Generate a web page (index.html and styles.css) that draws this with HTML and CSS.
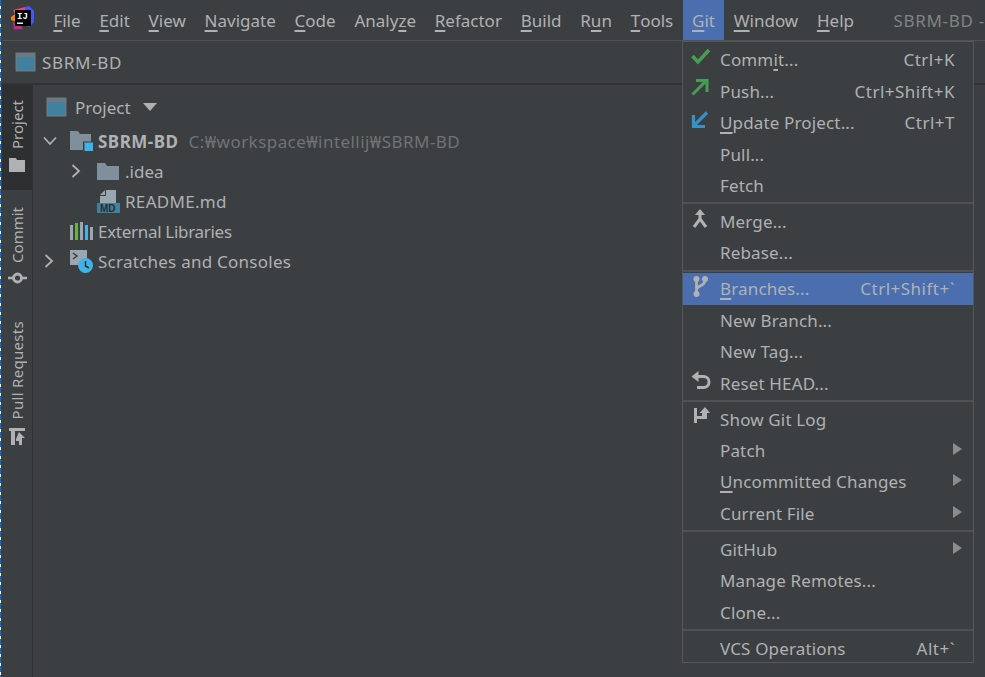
FILE: index.html
```html
<!DOCTYPE html>
<html lang="en">
<head>
<meta charset="utf-8">
<title>SBRM-BD</title>
<link rel="stylesheet" href="styles.css">
</head>
<body>
<div class="app">
  <header class="titlebar">
    <svg class="logo" width="24" height="24" viewBox="0 0 24 24">
      <path d="M2 4 L14 1 L15 6 L4 8 Z" fill="#fc3f6e"/>
      <path d="M14 1 L18 0 L23 5 L23 16 L18 21 L14 19 Z" fill="#3f5cf0"/>
      <path d="M0 11 L4 8 L5 16 L0 14 Z" fill="#f97a12"/>
      <path d="M2 16 L10 20 L12 23 L3 23.500 Z" fill="#c02b8c"/>
      <rect x="4" y="4" width="16" height="16" fill="#000"/>
      <text x="6" y="12.500" class="logo-text">IJ</text>
      <rect x="6" y="16.500" width="6" height="1.400" fill="#fff"/>
    </svg>
    <nav class="menubar">
      <span class="mi"><u>F</u>ile</span>
      <span class="mi"><u>E</u>dit</span>
      <span class="mi"><u>V</u>iew</span>
      <span class="mi"><u>N</u>avigate</span>
      <span class="mi"><u>C</u>ode</span>
      <span class="mi">Analy<u>z</u>e</span>
      <span class="mi"><u>R</u>efactor</span>
      <span class="mi"><u>B</u>uild</span>
      <span class="mi">R<u>u</u>n</span>
      <span class="mi"><u>T</u>ools</span>
      <span class="mi active"><u>G</u>it</span>
      <span class="mi"><u>W</u>indow</span>
      <span class="mi"><u>H</u>elp</span>
    </nav>
    <span class="wintitle">SBRM-BD -</span>
  </header>
  <div class="navbar">
    <svg width="22" height="20" viewBox="0 0 22 20"><rect x="0.500" y="0.500" width="20" height="19" fill="#6e7881"/><rect x="2" y="5" width="17" height="13" fill="#40819f"/></svg>
    <span class="caps">SBRM-BD</span>
  </div>
  <div class="workspace">
    <aside class="stripe">
      <div class="tab on">
        <span class="vt">Project</span>
        <svg width="16" height="14" viewBox="0 0 16 14"><path d="M0 0H7L8 2H16V14H0Z" fill="#afb1b3"/></svg>
      </div>
      <div class="tab commit">
        <span class="vt">Commit</span>
        <svg width="19" height="12" viewBox="0 0 19 12"><path d="M0 4.700H5V7.300H0ZM14 4.700H19V7.300H14Z" fill="#afb1b3"/><circle cx="9.500" cy="6" r="4" fill="none" stroke="#afb1b3" stroke-width="2.800"/></svg>
      </div>
      <div class="tab pull">
        <span class="vt spaced">Pull Requests</span>
        <svg width="16" height="17" viewBox="0 0 16 17"><path d="M0 0H16V3H0Z M2 3H6V17H2Z M10 4L16 10H13V17H10V13H7V11Z" fill="#afb1b3"/></svg>
      </div>
    </aside>
    <main class="panel">
      <div class="panel-head">
        <svg width="22" height="20" viewBox="0 0 22 20"><rect x="0.500" y="0.500" width="20" height="19" fill="#6e7881"/><rect x="2" y="5" width="17" height="13" fill="#40819f"/></svg>
        <span>Project</span>
        <svg class="dd" width="14" height="8" viewBox="0 0 14 8"><path d="M0 0H14L7 8Z" fill="#afb1b3"/></svg>
      </div>
      <ul class="tree">
        <li class="row">
          <svg class="chev wide" width="14" height="10" viewBox="0 0 14 10"><path d="M1 1.500L7 8L13 1.500" fill="none" stroke="#afb1b3" stroke-width="1.800"/></svg>
          <svg class="nodeico" width="23" height="21" viewBox="0 0 23 21"><path d="M0 0H8L10 3H21V19H0Z" fill="#7f8f9b"/><rect x="13" y="10.500" width="10" height="10" fill="#3c3f41"/><rect x="14.500" y="11.500" width="8.500" height="8.500" fill="#3eb4e9"/></svg>
          <b class="rootname">SBRM-BD</b><span class="path">C:₩workspace₩intellij₩SBRM-BD</span>
        </li>
        <li class="row lvl1">
          <svg class="chev" width="10" height="14" viewBox="0 0 10 14"><path d="M1.500 1L8 7L1.500 13" fill="none" stroke="#afb1b3" stroke-width="1.800"/></svg>
          <svg class="nodeico folder" width="22" height="17" viewBox="0 0 22 17"><path d="M0 0H8L10 3H22V17H0Z" fill="#7f8f9b"/></svg>
          <span>.idea</span>
        </li>
        <li class="row lvl1 nochev">
          <svg class="nodeico" width="23" height="23" viewBox="0 0 23 23"><path d="M9 0H19V13H3V6H9Z" fill="#9aa7b0"/><path d="M3 5L8 0V5Z" fill="#9aa7b0"/><rect x="0" y="13" width="23" height="10" fill="#40819f"/><text x="3" y="21.800" class="md">MD</text></svg>
          <span class="readme">README.md</span>
        </li>
        <li class="row lvl0 nochev">
          <svg class="nodeico" width="23" height="19" viewBox="0 0 23 19"><rect x="0" y="3" width="3" height="15" fill="#9aa7b0"/><rect x="5" y="1" width="3" height="17" fill="#62b543"/><rect x="10" y="0" width="3" height="18" fill="#9aa7b0"/><rect x="15" y="3" width="3" height="15" fill="#3eb4e9"/><rect x="20" y="5" width="3" height="13" fill="#9aa7b0"/></svg>
          <span class="extlib">External Libraries</span>
        </li>
        <li class="row lvl0b">
          <svg class="chev" width="10" height="14" viewBox="0 0 10 14"><path d="M1.500 1L8 7L1.500 13" fill="none" stroke="#afb1b3" stroke-width="1.800"/></svg>
          <svg class="nodeico" width="23" height="23" viewBox="0 0 23 23"><path d="M0 0H17V10A7 7 0 0 0 10 15H0Z" fill="#9aa7b0"/><path d="M3 3L7 6L3 9" fill="none" stroke="#3c3f41" stroke-width="1.500"/><circle cx="15.500" cy="15.500" r="7.500" fill="#3eb4e9"/><path d="M15.500 11V16L19 18" fill="none" stroke="#2b2d30" stroke-width="1.500"/></svg>
          <span class="scratch">Scratches and Consoles</span>
        </li>
      </ul>
    </main>
  </div>
  <div class="gitmenu">
    <div class="item"><svg class="mico" width="20" height="17" viewBox="0 0 20 17"><path d="M1.500 8L7 14L18 2" fill="none" stroke="#499c54" stroke-width="3.500"/></svg><span class="lbl">Comm<u>i</u>t...</span><span class="key">Ctrl+K</span></div>
    <div class="item"><svg class="mico" width="18" height="17" viewBox="0 0 18 17"><path d="M1.500 15.500L14 3M5 1.500H16V13" fill="none" stroke="#499c54" stroke-width="3"/></svg><span class="lbl">Push...</span><span class="key">Ctrl+Shift+K</span></div>
    <div class="item"><svg class="mico" width="18" height="18" viewBox="0 0 18 18"><path d="M16 1.500L4 13.500M2.500 4V15.500H14" fill="none" stroke="#3592c4" stroke-width="3.200"/></svg><span class="lbl"><u>U</u>pdate Project...</span><span class="key">Ctrl+T</span></div>
    <div class="item"><span class="lbl">Pull...</span></div>
    <div class="item"><span class="lbl">Fetch</span></div>
    <div class="sep"></div>
    <div class="item"><svg class="mico merge" width="16" height="20" viewBox="0 0 16 20"><path d="M8 3V10L2 18M8 10L14 18" fill="none" stroke="#afb1b3" stroke-width="3"/><path d="M3 6L8 0L13 6Z" fill="#afb1b3"/></svg><span class="lbl">Merge...</span></div>
    <div class="item"><span class="lbl">Rebase...</span></div>
    <div class="sep"></div>
    <div class="item sel"><svg class="mico branch" width="16" height="21" viewBox="0 0 16 21"><path d="M3.500 3V18M3.500 14C3.500 9 12 11 12 4" fill="none" stroke="#afb1b3" stroke-width="2.800"/><circle cx="3.500" cy="3" r="3" fill="#afb1b3"/><circle cx="3.500" cy="18" r="3" fill="#afb1b3"/><circle cx="12" cy="3" r="3" fill="#afb1b3"/></svg><span class="lbl"><u>B</u>ranches...</span><span class="key">Ctrl+Shift+`</span></div>
    <div class="item"><span class="lbl">New Branch...</span></div>
    <div class="item"><span class="lbl">New Tag...</span></div>
    <div class="item"><svg class="mico" width="20" height="19" viewBox="0 0 20 19"><path d="M4 5.500H12.500A5.500 5.500 0 0 1 12.500 16.500H6" fill="none" stroke="#afb1b3" stroke-width="3"/><path d="M7.500 0V11L0.500 5.500Z" fill="#afb1b3"/></svg><span class="lbl">Reset HEAD...</span></div>
    <div class="sep"></div>
    <div class="item"><svg class="mico log" width="16" height="17" viewBox="0 0 16 17"><path d="M0 1H3V16H0Z M3 9H8V12H3Z M8 6H5.500L11 0L16 6H13V12H8Z" fill="#afb1b3"/></svg><span class="lbl">Show Git Log</span></div>
    <div class="item"><span class="lbl">Patch</span><i class="arrow"></i></div>
    <div class="item"><span class="lbl"><u>U</u>ncommitted Changes</span><i class="arrow"></i></div>
    <div class="item"><span class="lbl">Current File</span><i class="arrow"></i></div>
    <div class="sep"></div>
    <div class="item"><span class="lbl">GitHub</span><i class="arrow"></i></div>
    <div class="item"><span class="lbl">Manage Remotes...</span></div>
    <div class="item"><span class="lbl">Clone...</span></div>
    <div class="sep"></div>
    <div class="item"><span class="lbl">VCS Operations</span><span class="key">Alt+`</span></div>
  </div>
</div>
</body>
</html>
```
FILE: styles.css
```css
html, body { margin: 0; padding: 0; height: 100%; overflow: hidden; background: #3c3f41; }
body { font-family: "Noto Sans", "Open Sans", sans-serif; font-size: 17px; color: #afb1b3; }
u { text-decoration: underline; text-decoration-thickness: 2px; text-underline-offset: 3px; }
.app { position: relative; height: 677px; border-left: 2px solid #3c3f41; box-sizing: border-box; display: flex; flex-direction: column; }
.app::before { content: ""; position: absolute; left: -2px; top: 0; bottom: 0; width: 1px; background: repeating-linear-gradient(#0a6fd8 0 6px, #ffffff 6px 9px); }
.titlebar { height: 40px; display: flex; align-items: center; border-bottom: 1px solid #515151; flex: none; }
.logo { margin-left: 9px; margin-top: -4px; flex: none; }
.logo-text { font: bold 9px "Liberation Mono", monospace; fill: #fff; }
.menubar { display: flex; margin-left: 9px; height: 40px; }
.mi { display: flex; align-items: center; padding: 1px 9.400px 0; white-space: pre; }
.mi.active { background: #4b6eaf; }
.wintitle { margin-left: 30px; color: #7f8385; letter-spacing: 0.700px; white-space: nowrap; }
.navbar { height: 42px; display: flex; align-items: center; gap: 5px; padding-left: 13px; border-bottom: 2px solid #323232; flex: none; }
.caps { letter-spacing: 0.700px; }
.workspace { flex: 1; display: flex; min-height: 0; }
.stripe { width: 30px; border-right: 1px solid #323232; flex: none; display: flex; flex-direction: column; }
.tab { display: flex; flex-direction: column; align-items: center; gap: 9px; }
.tab.on { background: #2d2f30; height: 105px; box-sizing: border-box; padding-top: 15px; }
.tab.commit { padding-top: 17px; }
.tab.pull { padding-top: 37px; }
.vt { writing-mode: vertical-rl; transform: rotate(180deg); font-size: 15px; white-space: nowrap; }
.vt.spaced { letter-spacing: 0.300px; }
.panel { flex: 1; padding-left: 13px; }
.panel-head { height: 38px; margin-top: 3px; display: flex; align-items: center; gap: 7px; }
.dd { margin-left: 5px; }
.tree { list-style: none; margin: 0 0 0 -3px; padding: 0; }
.row { height: 30px; display: flex; align-items: center; white-space: nowrap; }
.nodeico { margin-right: 5px; flex: none; }
.nodeico.folder { margin-right: 6px; }
.chev { flex: none; margin-right: 16px; }
.chev.wide { margin-right: 13px; }
.rootname { font-weight: 700; margin-right: 10px; letter-spacing: 0.500px; }
.path { color: #6f7375; letter-spacing: 0.450px; }
.lvl1 { padding-left: 28px; }
.lvl1.nochev { padding-left: 54px; }
.lvl0.nochev { padding-left: 27px; }
.lvl0b { padding-left: 1px; }
.readme { letter-spacing: 0.300px; }
.extlib { letter-spacing: -0.300px; }
.scratch { letter-spacing: 0.250px; }
.md { font: bold 10px "Liberation Sans", sans-serif; fill: #2b2d30; }
.gitmenu { position: absolute; left: 680px; top: 41px; width: 292px; height: 622px; box-sizing: border-box; padding-top: 2px; background: #3c3f41; border: 1px solid #555759; }
.item { position: relative; height: 31.450px; display: flex; align-items: center; padding: 0 18px 0 37px; box-sizing: border-box; white-space: nowrap; }
.item.sel { background: #4b6eaf; }
.lbl { flex: 1; letter-spacing: 0.150px; }
.key { text-align: right; letter-spacing: 0.500px; }
.mico { position: absolute; left: 8px; top: 4px; }
.mico.merge { left: 9px; top: 3px; }
.mico.branch { left: 10px; top: 3px; }
.mico.log { left: 11px; }
.sep { height: 4.500px; display: flex; align-items: center; }
.sep::before { content: ""; display: block; width: 100%; height: 2px; background: #515151; }
.arrow { position: absolute; right: 11px; top: 8px; width: 0; height: 0; border-left: 9px solid #8a8c8e; border-top: 6px solid transparent; border-bottom: 6px solid transparent; }
```
